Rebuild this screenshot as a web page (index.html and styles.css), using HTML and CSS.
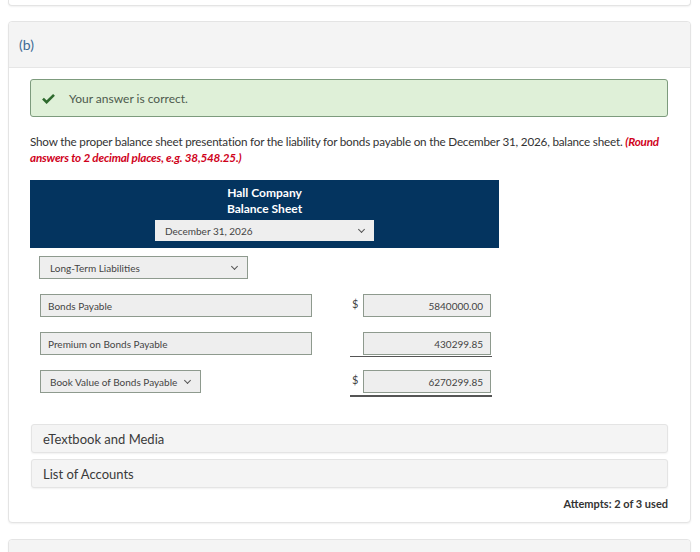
FILE: index.html
```html
<!DOCTYPE html>
<html lang="en">
<head>
    <meta charset="UTF-8" />
    <title>Bonds Payable :: Part (b)</title>
    <link rel="stylesheet" href="styles.css">
</head>
<body>
    <div class="page">
        <div class="card card-prev"></div>

        <div class="card">
            <div class="card-head">(b)</div>
            <div class="card-body">
                <div class="alert">
                    <svg class="check" width="13" height="11" viewBox="0 0 13 11">
                        <path d="M1 5.6 L4.6 9.2 L12 1.8" fill="none" stroke="#2e6a2e" stroke-width="2.6" />
                    </svg>
                    <span>Your answer is correct.</span>
                </div>

                <p class="question">Show the proper balance sheet presentation for the liability for bonds payable on the December 31, 2026, balance sheet. <em class="note">(Round</em> <em class="note">answers to 2 decimal places, e.g. 38,548.25.)</em></p>

                <div class="sheet-head">
                    <div class="sheet-title">Hall Company</div>
                    <div class="sheet-title">Balance Sheet</div>
                    <div class="field select date-select">December 31, 2026</div>
                </div>

                <div class="rows">
                    <div class="row">
                        <div class="field select section-select">Long-Term Liabilities</div>
                    </div>
                    <div class="row">
                        <div class="field label">Bonds Payable</div>
                        <div class="amount-group">
                            <span class="dollar">$</span>
                            <div class="field amount">5840000.00</div>
                        </div>
                    </div>
                    <div class="row">
                        <div class="field label">Premium on Bonds Payable</div>
                        <div class="amount-group single-line">
                            <span class="dollar"></span>
                            <div class="field amount">430299.85</div>
                        </div>
                    </div>
                    <div class="row">
                        <div class="field select total-select">Book Value of Bonds Payable</div>
                        <div class="amount-group double-line">
                            <span class="dollar">$</span>
                            <div class="field amount">6270299.85</div>
                        </div>
                    </div>
                </div>

                <div class="resource">eTextbook and Media</div>
                <div class="resource">List of Accounts</div>

                <div class="attempts">Attempts: 2 of 3 used</div>
            </div>
        </div>

        <div class="card card-next">
            <div class="card-head"></div>
        </div>
    </div>
</body>
</html>
```

FILE: styles.css
```css
* {
    margin: 0;
    padding: 0;
    box-sizing: border-box;
}

body {
    background-color: #ffffff;
    font-family: Lato, "Liberation Sans", sans-serif;
    color: #333333;
    height: 552px;
    overflow: hidden;
}

.page {
    padding: 0 9px 0 8px;
}

.card {
    border: 1px solid #e4e4e4;
    border-radius: 4px;
    background-color: #ffffff;
    box-shadow: 0 1px 2px rgba(0, 0, 0, 0.06);
}

.card-prev {
    height: 6px;
    border-top: none;
    border-radius: 0 0 4px 4px;
    margin-bottom: 15px;
}

.card-next {
    margin-top: 16px;
    height: 40px;
}

.card-head {
    height: 46px;
    background-color: #f4f4f4;
    border-bottom: 1px solid #e6e6e6;
    border-radius: 4px 4px 0 0;
    padding-left: 10px;
    display: flex;
    align-items: center;
    font-size: 14px;
    color: #3d6b95;
}

.card-body {
    padding: 11px 22px 11px 21px;
}

.alert {
    height: 38px;
    background-color: #dff0d8;
    border: 1px solid #7d9b7d;
    border-radius: 3px;
    display: flex;
    align-items: center;
    padding-left: 11px;
    font-size: 12px;
    color: #4d5a4d;
}

.check {
    margin-right: 14px;
}

.question {
    margin-top: 16px;
    font-size: 11.7px;
    line-height: 16px;
    color: #333333;
    letter-spacing: -0.2px;
}

.note {
    color: #d0021b;
    font-weight: 700;
}

.sheet-head {
    margin-top: 15px;
    width: 469px;
    height: 68px;
    background-color: #04345f;
    display: flex;
    flex-direction: column;
    align-items: center;
    padding-top: 5px;
}

.sheet-title {
    color: #ffffff;
    font-weight: 700;
    font-size: 12px;
    line-height: 16px;
}

.field {
    background-color: #eeeeee;
    border: 1px solid #8e9a8e;
    font-size: 10px;
    color: #444444;
    display: flex;
    align-items: center;
    padding: 0 7px;
    white-space: nowrap;
}

.select {
    position: relative;
    padding-right: 24px;
}

.select::after {
    content: "";
    position: absolute;
    right: 10px;
    top: 50%;
    width: 4px;
    height: 4px;
    margin-top: -4px;
    border-right: 1.5px solid #555555;
    border-bottom: 1.5px solid #555555;
    transform: rotate(45deg);
}

.date-select {
    margin-top: 3px;
    width: 219px;
    height: 21px;
    border: none;
    padding-left: 10px;
}

.rows {
    margin-top: 8px;
    display: flex;
    flex-direction: column;
    gap: 15px;
}

.row {
    display: flex;
    align-items: flex-start;
    height: 23px;
    padding-left: 9px;
}

.section-select {
    width: 209px;
    height: 23px;
    padding-left: 10px;
}

.label {
    margin-left: 1px;
    width: 272px;
    height: 23px;
}

.total-select {
    margin-left: 1px;
    width: 161px;
    height: 23px;
    padding-left: 9px;
    padding-right: 18px;
}

.amount-group {
    display: flex;
    align-items: flex-start;
    flex-shrink: 0;
    width: 142px;
    height: 23px;
    margin-left: 38px;
}

.total-select + .amount-group {
    margin-left: 149px;
}

.single-line {
    border-bottom: 1px solid #555555;
    height: 25px;
}

.double-line {
    border-bottom: 2px solid #555555;
    height: 27px;
}

.dollar {
    width: 13px;
    font-size: 11px;
    line-height: 20px;
    color: #444444;
    padding-left: 2px;
}

.amount {
    width: 128px;
    height: 23px;
    justify-content: flex-end;
}

.resource {
    margin-top: 6px;
    margin-left: 1px;
    height: 29px;
    background-color: #f4f4f4;
    border: 1px solid #e4e4e4;
    border-radius: 3px;
    box-shadow: 0 1px 2px rgba(0, 0, 0, 0.06);
    display: flex;
    align-items: center;
    padding-left: 11px;
    font-size: 13px;
    color: #3a3a3a;
}

.rows + .resource {
    margin-top: 31px;
}

.attempts {
    margin-top: 9px;
    text-align: right;
    font-size: 11px;
    line-height: 14px;
    font-weight: 700;
    color: #333333;
}
```
